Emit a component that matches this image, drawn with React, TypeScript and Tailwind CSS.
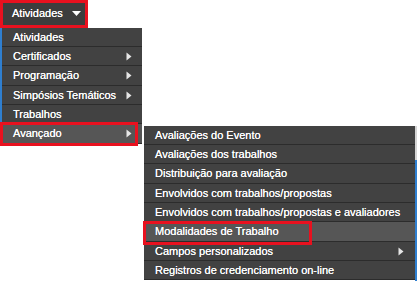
const mainItems = [
    { label: 'Atividades', sub: false },
    { label: 'Certificados', sub: true },
    { label: 'Programação', sub: true },
    { label: 'Simpósios Temáticos', sub: true },
    { label: 'Trabalhos', sub: false },
    { label: 'Avançado', sub: true, active: true },
];

const advancedItems = [
    { label: 'Avaliações do Evento', sub: false },
    { label: 'Avaliações dos trabalhos', sub: false },
    { label: 'Distribuição para avaliação', sub: false },
    { label: 'Envolvidos com trabalhos/propostas', sub: false },
    { label: 'Envolvidos com trabalhos/propostas e avaliadores', sub: false },
    { label: 'Modalidades de Trabalho', sub: false, active: true },
    { label: 'Campos personalizados', sub: true },
    { label: 'Registros de credenciamento on-line', sub: false },
];

function Arrow() {
    return (
        <svg width="6" height="9" viewBox="0 0 6 9" className="shrink-0">
            <path d="M0.5 0.5 L5.5 4.5 L0.5 8.5 Z" fill="#e6e6e6" />
        </svg>
    );
}

function Highlight({ className }: { className: string }) {
    return <div className={`pointer-events-none absolute border-[3px] border-[#e8111f] ${className}`} />;
}

interface RowProps {
    label: string;
    sub?: boolean;
    active?: boolean;
    tall: boolean;
    padRight: string;
    children?: React.ReactNode;
}

function MenuRow({ label, sub, active, tall, padRight, children }: RowProps) {
    return (
        <div
            className={`relative flex items-center justify-between border-b border-[#2c2c2c] pl-[11px] ${padRight} ${
                tall ? 'h-[20px]' : 'h-[19px]'
            } ${active ? 'bg-[#565656]' : 'bg-[#424242]'}`}
        >
            <span className="[text-shadow:0_0_0.3px_#fff]">{label}</span>
            {sub && <Arrow />}
            {children}
        </div>
    );
}

export default function App() {
    return (
        <div className="relative h-[281px] w-[417px] overflow-hidden bg-white font-['Liberation_Sans',Arial,sans-serif] text-[11px] text-white">
            {/* top button */}
            <div className="flex h-[27px] w-[88px] items-center bg-[#3d3d3d] pl-[12px]">
                <span className="[text-shadow:0_0_0.3px_#fff]">Atividades</span>
                <svg width="9" height="5" viewBox="0 0 9 5" className="ml-[9px]">
                    <path d="M0 0 L9 0 L4.5 5 Z" fill="#ffffff" />
                </svg>
            </div>

            {/* first level dropdown */}
            <div className="mt-[1px] w-[142px] border-l-2 border-[#2f7fd0] bg-[#424242]">
                {mainItems.map((item, i) => (
                    <MenuRow key={item.label} {...item} tall={i % 3 === 2} padRight="pr-[10px]">
                        {item.active && (
                            <div className="absolute left-[calc(100%+2px)] top-[2px] w-[271px] bg-[#424242]">
                                {advancedItems.map((subItem, j) => (
                                    <MenuRow key={subItem.label} {...subItem} tall={j % 3 === 2} padRight="pr-[11px]" />
                                ))}
                            </div>
                        )}
                    </MenuRow>
                ))}
            </div>

            {/* page edge behind the menu */}
            <div className="absolute right-0 top-[126px] h-[34px] w-[2px] bg-[#d4d4d4]" />
            <div className="absolute right-0 top-[160px] h-[121px] w-[2px] bg-[#2f7fd0]" />

            {/* red highlight annotations */}
            <Highlight className="left-0 top-0 h-[28px] w-[88px]" />
            <Highlight className="left-0 top-[122px] h-[24px] w-[138px]" />
            <Highlight className="left-[143px] top-[221px] h-[24px] w-[169px]" />
        </div>
    );
}
